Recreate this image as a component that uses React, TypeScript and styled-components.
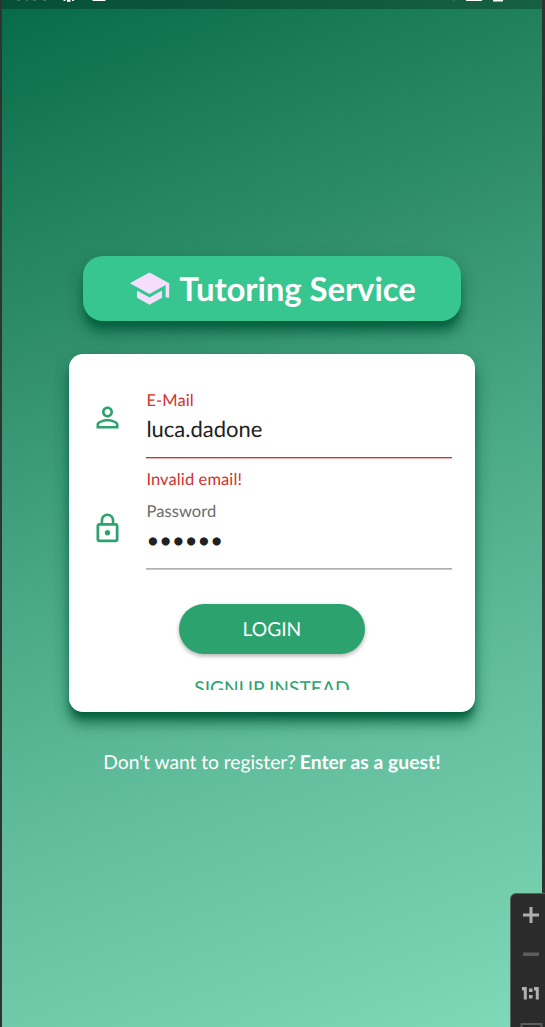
import React from 'react';
import styled, { createGlobalStyle } from 'styled-components';

const GlobalStyle = createGlobalStyle`
  * { box-sizing: border-box; }
  body {
    margin: 0;
    background: #2f2f2f;
    font-family: Lato, sans-serif;
    text-rendering: geometricPrecision;
  }
`;

const Screen = styled.main`
  position: relative;
  width: 545px;
  height: 1027px;
  overflow: hidden;
  padding: 0 3px 0 2px;
  background: #2f3231;
`;

const Phone = styled.div`
  display: flex;
  flex-direction: column;
  align-items: center;
  height: 1027px;
  background: linear-gradient(159.5deg, #066a49 0%, #23845f 20%, #318f6c 30%, #3f9f7c 42%, #5ab795 63%, #80d9b9 100%);
`;

const StatusBar = styled.div`
  display: flex;
  flex: none;
  align-self: stretch;
  height: 9px;
  background: rgba(0, 0, 0, 0.25);
`;

const TitleBanner = styled.header`
  display: flex;
  flex: none;
  align-items: center;
  justify-content: center;
  gap: 8px;
  width: 378px;
  height: 65px;
  margin-top: 247px;
  border-radius: 20px;
  background: #37c68f;
  box-shadow: 0 8px 6px -3px #05613f, 0 12px 13px 0 rgba(3, 91, 60, 0.6), 0 5px 16px rgba(3, 91, 60, 0.25);
`;

const Title = styled.h1`
  margin: 0;
  color: #fff;
  font-size: 33px;
  font-weight: 700;
  line-height: 40px;
  letter-spacing: -0.12px;
`;

const Card = styled.section`
  flex: none;
  width: 406px;
  height: 358px;
  margin-top: 33px;
  padding: 22px 22.6px 22px 22.4px;
  border-radius: 14px;
  background: #fff;
  box-shadow: 0 8px 6px -3px #05613f, 0 12px 13px 0 rgba(3, 91, 60, 0.6), 0 5px 16px rgba(3, 91, 60, 0.25);
`;

const Form = styled.form`
  display: flex;
  flex-direction: column;
  align-items: center;
  height: 314px;
  overflow: hidden;
`;

const Row = styled.div<{ $height: number }>`
  display: flex;
  flex: none;
  gap: 22px;
  width: 100%;
  height: ${(p) => p.$height}px;
`;

const IconBox = styled.div`
  flex: none;
  width: 33px;
  height: 33px;
  margin-top: 24.5px;
`;

const Glyph = styled.svg`
  display: block;
  flex: none;
  overflow: visible;
`;

const Field = styled.div`
  flex: 1;
`;

const Label = styled.div<{ $error?: boolean }>`
  height: 35px;
  padding-top: 14px;
  color: ${(p) => (p.$error ? '#d32f2f' : '#6b6b6b')};
  font-size: 16.5px;
  line-height: 20px;
  letter-spacing: 0.1px;
`;

const Value = styled.div<{ $error?: boolean }>`
  height: 47px;
  padding-top: 5px;
  border-bottom: 1px solid ${(p) => (p.$error ? '#d32f2f' : '#b0b0b0')};
  box-shadow: 0 1px 0 ${(p) => (p.$error ? '#efb5b5' : '#c8c8c8')};
  color: #212121;
  font-size: 22px;
  line-height: 26px;
`;

const ErrorText = styled.div`
  padding-top: 11px;
  color: #d32f2f;
  font-size: 16.5px;
  line-height: 20px;
  letter-spacing: 0.1px;
`;

const LoginButton = styled.button`
  flex: none;
  width: 186px;
  height: 50px;
  margin-top: 34.4px;
  padding: 2px 0 0;
  border: 0;
  border-radius: 25px;
  background: #2ca26f;
  box-shadow: 0 2px 4px rgba(0, 0, 0, 0.32);
  color: #fff;
  font: 400 19.25px/24px Lato, sans-serif;
  text-rendering: geometricPrecision;
`;

const SignupLink = styled.a`
  flex: none;
  margin-top: 22.4px;
  color: #2ca26f;
  font-size: 19.25px;
  line-height: 24px;
`;

const GuestLine = styled.p`
  margin: 39px 0 0;
  color: #fff;
  font-size: 19.25px;
  line-height: 24px;
  letter-spacing: -0.04px;

  b {
    margin-left: -1px;
    letter-spacing: 0.05px;
  }
`;

const ZoomPanel = styled.aside`
  position: absolute;
  right: -8.5px;
  top: 892.500px;
  display: flex;
  flex-direction: column;
  width: 44px;
  height: 150px;
  padding: 13.500px 0 0 11.500px;
  border: 1px solid #55615c;
  border-radius: 6px;
  background: #2b2b2b;
`;

const StatusIcons = () => (
  <Glyph width="540" height="9" viewBox="0 0 540 9">
    <g fill="#3f7864">
      <rect x="15" y="0" width="3" height="1" />
      <rect x="24" y="0" width="2" height="1" />
      <rect x="31" y="0" width="3" height="1" />
      <rect x="41" y="0" width="3" height="1" />
      <rect x="451" y="0" width="1.5" height="1" />
    </g>
    <g fill="#fff">
      <rect x="61.500" y="0" width="2" height="1" />
      <rect x="65" y="0" width="3.500" height="1.800" />
      <rect x="70" y="0" width="2" height="1" />
      <rect x="90.500" y="0" width="13" height="1" />
      <rect x="464" y="0" width="16" height="1" />
      <rect x="491" y="0" width="10" height="1.500" />
    </g>
  </Glyph>
);

export default function App() {
  return (
    <>
      <GlobalStyle />
      <Screen>
        <Phone>
          <StatusBar>
            <StatusIcons />
          </StatusBar>
          <TitleBanner>
            <Glyph width="43" height="43" viewBox="0 0 24 24" fill="#f5defd">
              <path d="M5 13.18v4L12 21l7-3.82v-4L12 17l-7-3.82zM12 3L1 9l11 6 9-4.91V17h2V9L12 3z" />
            </Glyph>
            <Title>Tutoring Service</Title>
          </TitleBanner>
          <Card>
            <Form>
              <Row $height={111}>
                <IconBox>
                  <Glyph width="33" height="33" viewBox="0 0 24 24" fill="#2ca26f">
                    <path d="M12 5.900c1.160 0 2.100.940 2.100 2.100s-.940 2.100-2.100 2.100S9.900 9.160 9.900 8s.940-2.100 2.100-2.100m0 9c2.970 0 6.100 1.460 6.100 2.100v1.100H5.900V17c0-.640 3.130-2.100 6.100-2.100M12 4C9.790 4 8 5.790 8 8s1.790 4 4 4 4-1.790 4-4-1.790-4-4-4zm0 9c-2.670 0-8 1.340-8 4v3h16v-3c0-2.660-5.330-4-8-4z" />
                  </Glyph>
                </IconBox>
                <Field>
                  <Label $error>E-Mail</Label>
                  <Value $error>luca.dadone</Value>
                  <ErrorText>Invalid email!</ErrorText>
                </Field>
              </Row>
              <Row $height={83}>
                <IconBox>
                  <Glyph width="33" height="33" viewBox="0 0 24 24" fill="#2ca26f">
                    <path d="M12 17c1.100 0 2-.900 2-2s-.900-2-2-2-2 .900-2 2 .900 2 2 2zm6-9h-1V6c0-2.760-2.240-5-5-5S7 3.240 7 6v2H6c-1.100 0-2 .900-2 2v10c0 1.100.900 2 2 2h12c1.100 0 2-.900 2-2V10c0-1.100-.900-2-2-2zM8.900 6c0-1.710 1.390-3.100 3.100-3.100s3.100 1.390 3.100 3.100v2H8.900V6zM18 20H6V10h12v10z" />
                  </Glyph>
                </IconBox>
                <Field>
                  <Label>Password</Label>
                  <Value>••••••</Value>
                </Field>
              </Row>
              <LoginButton type="button">LOGIN</LoginButton>
              <SignupLink>SIGNUP INSTEAD</SignupLink>
            </Form>
          </Card>
          <GuestLine>
            Don't want to register? <b>Enter as a guest!</b>
          </GuestLine>
        </Phone>
        <ZoomPanel>
          <Glyph width="22" height="130" viewBox="0 0 22 130">
            <path d="M1 8h16M9 0v16" fill="none" stroke="#b0b0b0" strokeWidth="3" />
            <rect x="1" y="45.500" width="16" height="3.500" fill="#5d5d5d" />
            <g fill="#b0b0b0">
              <path d="M0 80h4.800v12.500H1.800v-9H0zM12 80h4.800v12.500h-3v-9H12z" />
              <rect x="7" y="81.500" width="3.500" height="3.500" />
              <rect x="7" y="88" width="3.500" height="3.500" />
            </g>
            <rect x="-.5" y="117" width="20" height="18" fill="none" stroke="#5d5d5d" strokeWidth="2" />
          </Glyph>
        </ZoomPanel>
      </Screen>
    </>
  );
}
